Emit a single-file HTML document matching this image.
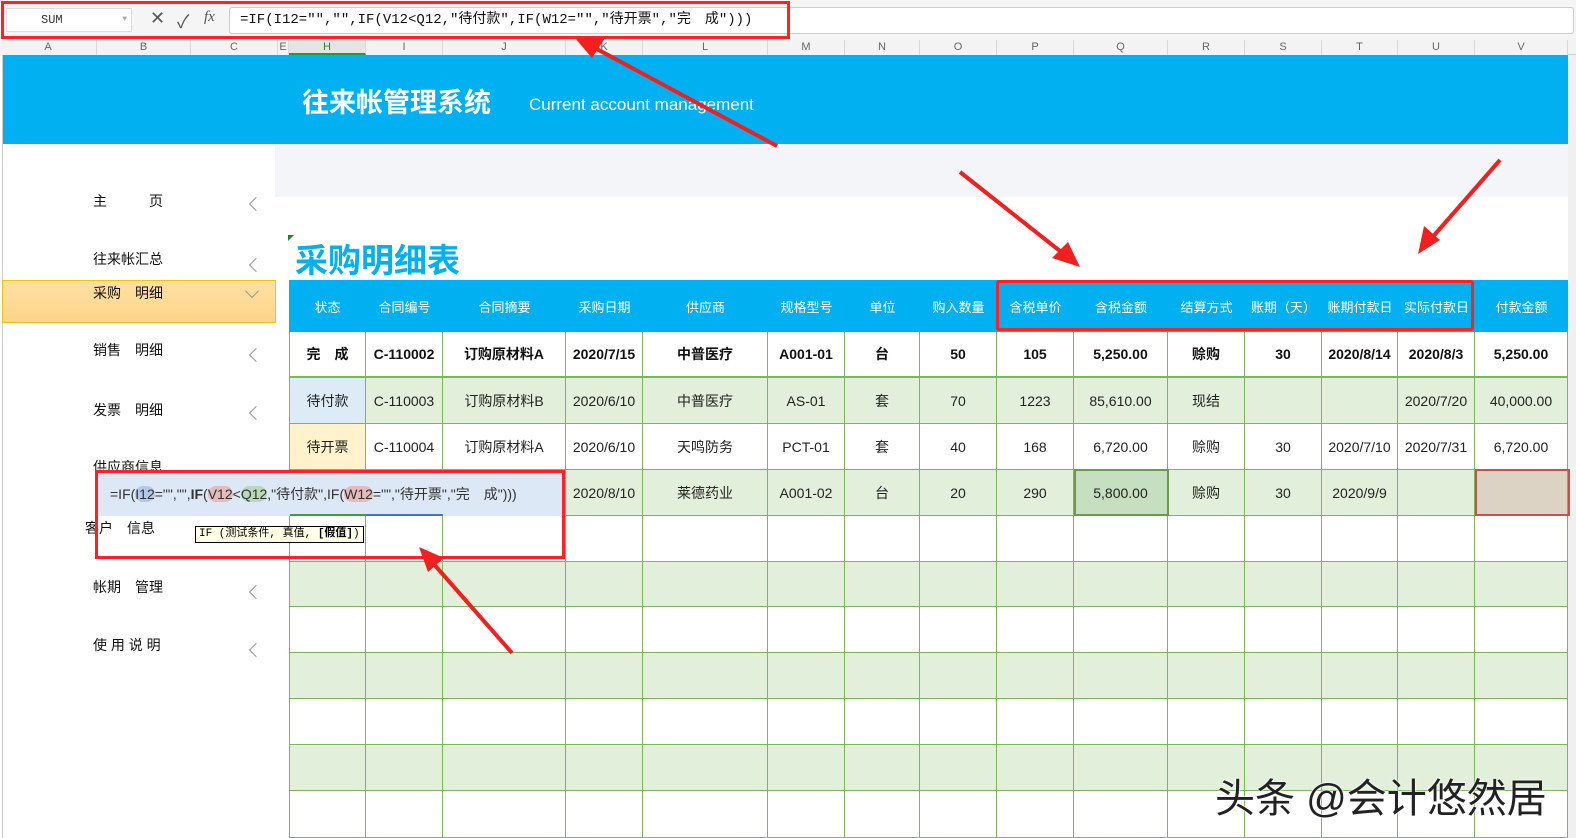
<!DOCTYPE html>
<html><head><meta charset="utf-8"><style>
*{margin:0;padding:0;box-sizing:border-box}
body{width:1576px;height:838px;overflow:hidden;background:#fff;position:relative;font-family:"Liberation Sans","Noto Sans CJK SC",sans-serif}
.a{position:absolute}
.colh{position:absolute;top:40px;height:15px;font-size:11px;color:#666;text-align:center;line-height:15px;border-right:1px solid #d8d8d8;background:#f3f3f3}
.c{position:absolute;display:flex;align-items:center;justify-content:center;font-size:14px;color:#222;border-right:1px solid #7cb55a;border-bottom:1px solid #7cb55a;white-space:nowrap}
.h{color:#fff;font-size:13px;border:none}
.b{font-weight:bold;color:#111}
.menu{position:absolute;left:93px;font-size:14px;color:#111}
.chev{position:absolute;left:246px;width:10px;height:10px;border-left:1px solid #999;border-bottom:1px solid #999;transform:rotate(45deg)}
</style></head><body>
<!-- formula bar -->
<div class="a" style="left:0;top:0;width:1576px;height:40px;background:#f5f5f5"></div>
<div class="a" style="left:6px;top:8px;width:126px;height:24px;background:#fff;border:1px solid #ddd;font-family:'Liberation Mono',monospace;font-size:12px;line-height:22px;padding-left:34px;color:#333">SUM<span style="position:absolute;right:4px;color:#aaa;font-size:8px">▼</span></div>
<div class="a" style="left:150px;top:8px;font-size:18px;color:#555">✕</div>
<div class="a" style="left:177px;top:8px;font-size:18px;color:#555">✓</div>
<div class="a" style="left:204px;top:9px;font-size:15px;color:#555;font-style:italic;font-family:'Liberation Serif',serif">fx</div>
<div class="a" style="left:229px;top:7px;width:1345px;height:27px;background:#fff;border:1px solid #ccc;border-radius:3px;font-family:'Liberation Mono','Noto Sans CJK SC',monospace;font-size:14px;line-height:25px;padding-left:10px;color:#111">=IF(I12="","",IF(V12&lt;Q12,"待付款",IF(W12="","待开票","完　成")))</div>
<div class="a" style="left:1px;top:1px;width:789px;height:38px;border:3px solid #f22"></div>
<!-- column headers -->
<div class="a" style="left:0;top:40px;width:1576px;height:15px;background:#f3f3f3;border-bottom:1px solid #ccc"></div>
<div class="colh" style="left:0;width:97px">A</div><div class="colh" style="left:97px;width:94px">B</div><div class="colh" style="left:191px;width:87px">C</div><div class="colh" style="left:278px;width:11px">E</div>
<div class="colh" style="left:289px;width:77px;color:#2a8a2a;background:#e4e4e4;border-bottom:2px solid #2a9a2a">H</div><div class="colh" style="left:366px;width:77px">I</div><div class="colh" style="left:443px;width:123px">J</div><div class="colh" style="left:566px;width:77px">K</div><div class="colh" style="left:643px;width:125px">L</div><div class="colh" style="left:768px;width:77px">M</div><div class="colh" style="left:845px;width:75px">N</div><div class="colh" style="left:920px;width:77px">O</div><div class="colh" style="left:997px;width:77px">P</div><div class="colh" style="left:1074px;width:94px">Q</div><div class="colh" style="left:1168px;width:77px">R</div><div class="colh" style="left:1245px;width:77px">S</div><div class="colh" style="left:1322px;width:76px">T</div><div class="colh" style="left:1398px;width:77px">U</div><div class="colh" style="left:1475px;width:93px">V</div>
<!-- banner -->
<div class="a" style="left:3px;top:55px;width:1565px;height:89px;background:#00b0f0"></div>
<div class="a" style="left:302px;top:81px;font-size:27px;font-weight:bold;color:#fff">往来帐管理系统</div>
<div class="a" style="left:529px;top:95px;font-size:17px;color:#fff">Current account management</div>
<div class="a" style="left:275px;top:144px;width:1293px;height:53px;background:#f4f5f9"></div>
<div class="a" style="left:1568px;top:55px;width:8px;height:783px;background:#f0f0f0"></div>
<div class="a" style="left:2px;top:55px;width:1px;height:783px;background:#ccc"></div>
<!-- sidebar -->
<div class="menu" style="top:191px">主　　　页</div><div class="chev" style="top:199px;left:251px"></div>
<div class="menu" style="top:249px">往来帐汇总</div><div class="chev" style="top:260px;left:251px"></div>
<div class="a" style="left:2px;top:280px;width:274px;height:43px;background:linear-gradient(#fee0a3,#fdd58a);border:1px solid #f4c018"></div>
<div class="menu" style="top:283px">采购　明细</div><div class="chev" style="top:286px;left:247px;transform:rotate(-45deg)"></div>
<div class="menu" style="top:340px">销售　明细</div><div class="chev" style="top:350px;left:251px"></div>
<div class="menu" style="top:400px">发票　明细</div><div class="chev" style="top:408px;left:251px"></div>
<div class="menu" style="top:457px">供应商信息</div>
<div class="menu" style="top:518px;left:85px">客户　信息</div>
<div class="menu" style="top:577px">帐期　管理</div><div class="chev" style="top:587px;left:251px"></div>
<div class="menu" style="top:635px">使 用 说 明</div><div class="chev" style="top:645px;left:251px"></div>
<!-- title -->
<div class="a" style="left:295px;top:234px;font-size:33px;font-weight:bold;color:#00b0f0">采购明细表</div>
<div class="a" style="left:288px;top:235px;width:0;height:0;border-top:6px solid #1a8a1a;border-right:6px solid transparent"></div>
<!-- table -->
<div class="a" style="left:289px;top:280px;width:1279px;height:52px;background:#00b0f0"></div>
<div id="t"></div>
<script>
var X=[289,366,443,566,643,768,845,920,997,1074,1168,1245,1322,1398,1475,1568];
var H=["状态","合同编号","合同摘要","采购日期","供应商","规格型号","单位","购入数量","含税单价","含税金额","结算方式","账期（天）","账期付款日","实际付款日","付款金额"];
var R=[["完　成","C-110002","订购原材料A","2020/7/15","中普医疗","A001-01","台","50","105","5,250.00","赊购","30","2020/8/14","2020/8/3","5,250.00"],
["待付款","C-110003","订购原材料B","2020/6/10","中普医疗","AS-01","套","70","1223","85,610.00","现结","","","2020/7/20","40,000.00"],
["待开票","C-110004","订购原材料A","2020/6/10","天鸣防务","PCT-01","套","40","168","6,720.00","赊购","30","2020/7/10","2020/7/31","6,720.00"],
["","","","2020/8/10","莱德药业","A001-02","台","20","290","5,800.00","赊购","30","2020/9/9","",""]];
var Y=[332,378,424,470,516,562,607,653,699,745,791,838];
var s="";
for(var i=0;i<15;i++)s+='<div class="c h" style="left:'+X[i]+'px;top:280px;width:'+(X[i+1]-X[i])+'px;height:52px">'+H[i]+'</div>';
for(var r=0;r<11;r++){for(var i=0;i<15;i++){var bg=r%2?"#e2efda":"#fff";var t=r<4?R[r][i]:"";
if(r==1&&i==0)bg="#ddebf7";if(r==2&&i==0)bg="#fff2cc";if(r==3&&i==9)bg="#c6dfc0";if(r==3&&i==14)bg="#ddd3c5";
s+='<div class="c'+(r==0?' b':'')+'" style="left:'+X[i]+'px;top:'+Y[r]+'px;width:'+(X[i+1]-X[i])+'px;height:'+(Y[r+1]-Y[r])+'px;background:'+bg+';'+(i==0?'border-left:1px solid #7cb55a;':'')+(r==0?'border-bottom:2px solid #7cb55a;':'')+'">'+t+'</div>';}}
document.getElementById("t").innerHTML=s;
</script>
<div class="a" style="left:1074px;top:469px;width:95px;height:47px;border:2px solid #6a9a4a"></div>
<div class="a" style="left:1475px;top:469px;width:95px;height:47px;border:2px solid #c85050"></div>
<!-- formula popup -->
<div class="a" style="left:97px;top:472px;width:465px;height:44px;background:#dce8f5"></div>
<div class="a" style="left:110px;top:484px;font-size:14px;color:#333">=IF(<span style="background:#b4c8ea;border-radius:8px">I12</span>="","",<b>IF</b>(<span style="background:#e4bcbc;border-radius:8px">V12</span>&lt;<span style="background:#bcd8bc;border-radius:8px">Q12</span>,"待付款",IF(<span style="background:#e4bcbc;border-radius:8px">W12</span>="","待开票","完　成")))</div>
<div class="a" style="left:366px;top:514px;width:77px;height:2px;background:#4a72c8"></div>
<div class="a" style="left:290px;top:514px;width:76px;height:2px;background:#3aa03a"></div>
<div class="a" style="left:195px;top:526px;height:17px;padding:0 3px;background:#ffffe6;border:1px solid #000;font-family:'Liberation Mono','Noto Sans CJK SC',monospace;font-size:11px;line-height:15px">IF (测试条件, 真值, <b>[假值]</b>)</div>
<div class="a" style="left:95px;top:470px;width:470px;height:89px;border:3px solid #f22"></div>
<div class="a" style="left:996px;top:280px;width:478px;height:51px;border:3px solid #f22;border-radius:3px"></div>
<!-- arrows -->
<svg class="a" style="left:0;top:0" width="1576" height="838">
<g stroke="#f02020" stroke-width="4" fill="#f02020">
<line x1="777" y1="146" x2="595" y2="48"/><polygon points="575,38 605,38 592,58" stroke="none"/>
<line x1="960" y1="172" x2="1065" y2="255"/><polygon points="1080,267 1052,258 1068,242" stroke="none"/>
<line x1="1500" y1="160" x2="1430" y2="240"/><polygon points="1418,254 1424,226 1440,240" stroke="none"/>
<line x1="512" y1="653" x2="432" y2="562"/><polygon points="419,547 444,558 428,572" stroke="none"/>
</g></svg>
<div class="a" style="left:1215px;top:766px;font-size:40px;color:#222;white-space:nowrap;text-shadow:0 0 2px #fff,0 0 2px #fff">头条 @会计悠然居</div>
</body></html>
